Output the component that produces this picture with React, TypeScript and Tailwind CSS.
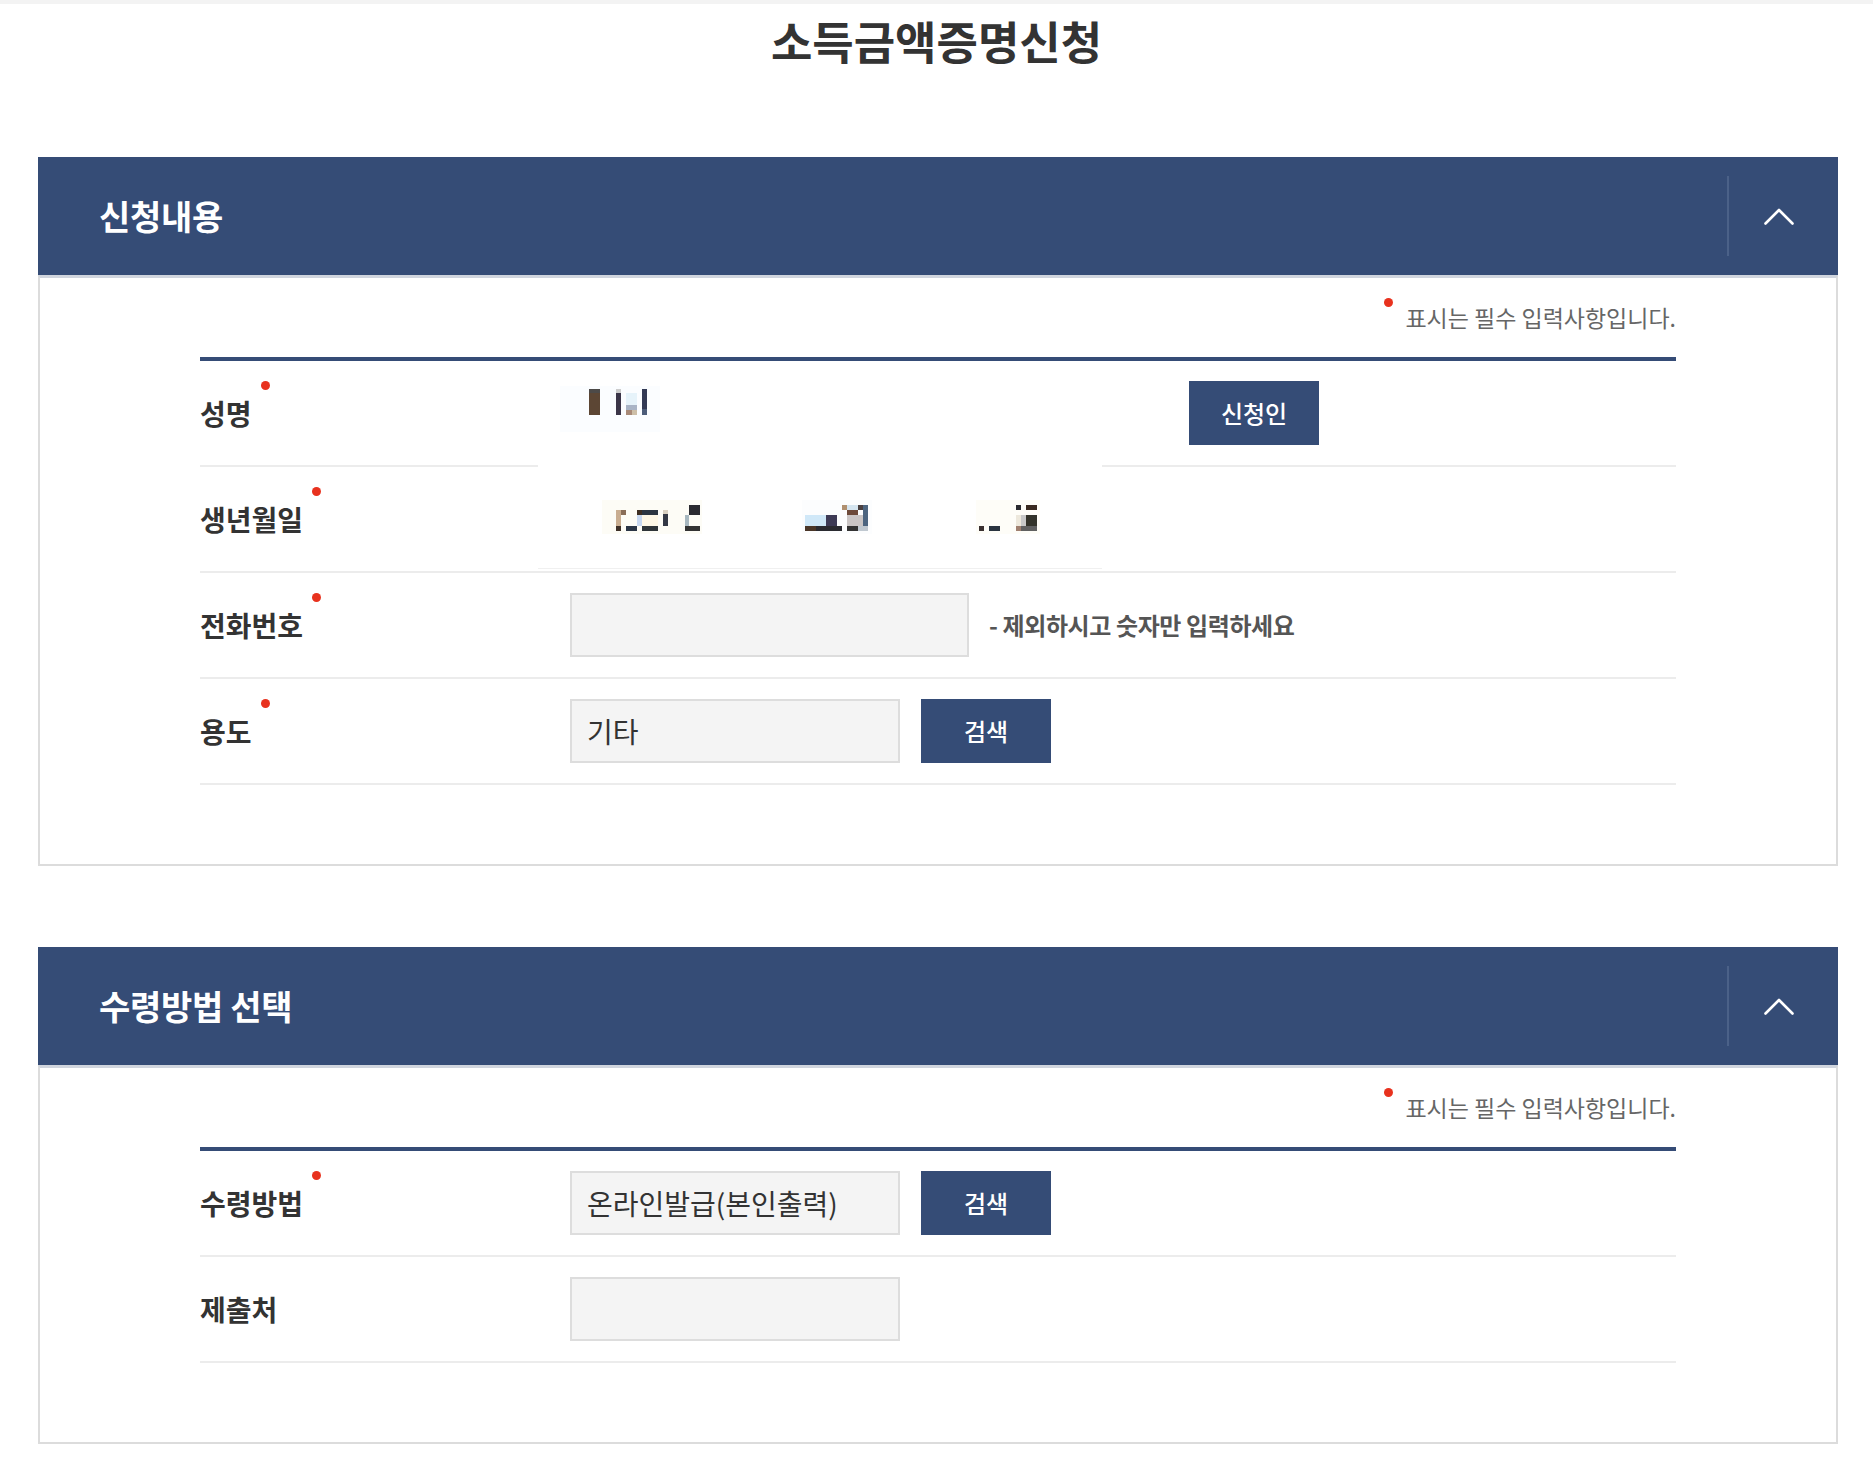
import type { ReactNode } from "react"

const FONT = { fontFamily: '"Noto Sans CJK KR", "Noto Sans", sans-serif' }

function Dot({ className = "" }: { className?: string }) {
  return <span className={`block w-[9px] h-[9px] rounded-full bg-[#e8321e] ${className}`} />
}

function ChevronUp() {
  return (
    <svg width="30" height="18" viewBox="0 0 30 18" fill="none">
      <polyline points="1.5,16.5 15,3 28.5,16.5" stroke="#fff" strokeWidth="2.6" strokeLinecap="round" strokeLinejoin="round" />
    </svg>
  )
}

function SectionHeader({ title }: { title: string }) {
  return (
    <div className="h-[118px] bg-[#354c76] flex items-center">
      <h2 className="flex-1 pl-[61px] text-[34px] leading-[40px] font-bold tracking-[-0.3px] text-white">{title}</h2>
      <div className="w-[2px] h-[80px] bg-[#4b6188]" />
      <button className="w-[100px] mr-[9px] h-full flex items-center justify-center">
        <ChevronUp />
      </button>
    </div>
  )
}

function RequiredNote() {
  return (
    <div className="flex justify-end items-start h-[30px]">
      <Dot className="mt-[-4px] mr-[12px]" />
      <span className="text-[23px] leading-[30px] text-[#666]">표시는 필수 입력사항입니다.</span>
    </div>
  )
}

function Row({ label, required, children }: { label: string; required?: boolean; children?: ReactNode }) {
  return (
    <div className="flex h-[106px] border-b-2 border-[#ececec]">
      <div className="w-[337px] flex items-center">
        <span className="relative inline-block text-[28px] leading-[36px] font-bold text-[#333]">
          {label}
          {required && <Dot className="absolute left-full ml-[9px] top-[-14px]" />}
        </span>
      </div>
      <div className="flex-1 flex items-center pl-[33px]">{children}</div>
    </div>
  )
}

function TextBox({ value, width }: { value?: string; width: string }) {
  return (
    <input
      type="text"
      defaultValue={value}
      style={FONT}
      className={`${width} h-[64px] border-2 border-[#dddddd] bg-[#f4f4f4] pl-[15px] text-[28px] text-[#333] outline-none`}
    />
  )
}

function NavyButton({ children, className = "" }: { children: ReactNode; className?: string }) {
  return (
    <button
      style={FONT}
      className={`w-[130px] h-[64px] bg-[#354c76] text-white text-[24px] font-medium ${className}`}
    >
      {children}
    </button>
  )
}

// pixelated redaction over the name / birth date values
const blobs: [number, number, number, number, string][] = [
  [560, 386, 100, 46, "#fbfdff"],
  [589, 389, 11, 4, "#4d4a48"],
  [589, 393, 11, 22, "#5c4634"],
  [616, 389, 5, 4, "#cccccc"],
  [616, 393, 5, 22, "#3b3548"],
  [626, 393, 11, 12, "#e6f3fa"],
  [626, 405, 11, 5, "#a9b4c6"],
  [626, 410, 6, 5, "#a88a78"],
  [632, 410, 5, 5, "#cdbfa8"],
  [642, 389, 5, 20, "#333a55"],
  [642, 409, 5, 6, "#4d5d7a"],
  // birth date group 1
  [602, 500, 100, 34, "#fdfcf6"],
  [616, 510, 5, 16, "#c9ad90"],
  [621, 510, 5, 5, "#8a6e58"],
  [637, 510, 5, 5, "#3d2e22"],
  [642, 510, 16, 5, "#2c3540"],
  [637, 515, 5, 11, "#c8d8f0"],
  [642, 515, 16, 11, "#fff8e6"],
  [663, 510, 5, 4, "#d8cfc0"],
  [663, 514, 5, 12, "#333845"],
  [685, 515, 4, 11, "#a8b8c0"],
  [689, 505, 11, 10, "#2a2a30"],
  [616, 526, 5, 5, "#3d3028"],
  [626, 526, 11, 5, "#2a3545"],
  [642, 526, 16, 5, "#2f3538"],
  [685, 526, 15, 5, "#333333"],
  // group 2
  [802, 500, 70, 34, "#fcfdfe"],
  [805, 515, 21, 11, "#d0e8f8"],
  [826, 515, 11, 11, "#3d3a55"],
  [842, 505, 5, 5, "#b09070"],
  [847, 505, 11, 5, "#d5e5f0"],
  [858, 505, 5, 5, "#4a4040"],
  [847, 510, 11, 5, "#6d4a3a"],
  [847, 515, 16, 11, "#cac5c5"],
  [863, 505, 5, 21, "#4d6580"],
  [805, 526, 11, 5, "#4a3628"],
  [816, 526, 26, 5, "#2a2a30"],
  [847, 526, 11, 5, "#333333"],
  [858, 526, 10, 5, "#c0c8d0"],
  // group 3
  [976, 500, 64, 34, "#fefdf8"],
  [1016, 505, 5, 5, "#2a2a30"],
  [1026, 505, 11, 5, "#3a2a20"],
  [1016, 515, 5, 11, "#ede8dc"],
  [1021, 515, 5, 11, "#c8c8c8"],
  [1026, 515, 11, 11, "#33332a"],
  [979, 526, 5, 5, "#3a3030"],
  [989, 526, 11, 5, "#2a3440"],
  [1016, 526, 5, 5, "#a08070"],
  [1021, 526, 16, 5, "#606060"],
]

function Redaction() {
  return (
    <div className="absolute left-[338px] top-0 w-[564px] h-[208px] bg-white border-b border-[#f0f0f0]">
      <svg width="564" height="207" viewBox="538 361 564 207">
        {blobs.map(([x, y, w, h, c], i) => (
          <rect key={i} x={x} y={y} width={w} height={h} fill={c} />
        ))}
      </svg>
    </div>
  )
}

function Section({ title, children, className = "" }: { title: string; children: ReactNode; className?: string }) {
  return (
    <section className={className}>
      <SectionHeader title={title} />
      <div className="border-x-2 border-b-2 border-[#dcdcdc] border-t-[3px] border-t-[#d0d5de] px-[160px] pt-[24px] pb-[79px]">
        <RequiredNote />
        <div className="mt-[25px] border-t-4 border-[#354c76]">{children}</div>
      </div>
    </section>
  )
}

export default function App() {
  return (
    <div style={FONT} className="min-h-[1473px] bg-white text-[#333]">
      <div className="h-[4px] bg-[#f3f3f3]" />
      <h1 className="h-[74px] flex items-center justify-center text-[45px] font-bold text-[#333]">
        소득금액증명신청
      </h1>

      <div className="ml-[38px] w-[1800px] mt-[79px]">
        <Section title="신청내용">
          <div className="relative">
            <Row label="성명" required>
              <span className="w-[619px]" />
              <NavyButton>신청인</NavyButton>
            </Row>
            <Row label="생년월일" required />
            <Row label="전화번호" required>
              <TextBox width="w-[399px]" />
              <span className="ml-[20px] text-[24px] font-bold tracking-[-0.4px] text-[#555]">- 제외하시고 숫자만 입력하세요</span>
            </Row>
            <Row label="용도" required>
              <TextBox width="w-[330px]" value="기타" />
              <NavyButton className="ml-[21px]">검색</NavyButton>
            </Row>
            <Redaction />
          </div>
        </Section>

        <Section title="수령방법 선택" className="mt-[81px]">
          <Row label="수령방법" required>
            <TextBox width="w-[330px]" value="온라인발급(본인출력)" />
            <NavyButton className="ml-[21px]">검색</NavyButton>
          </Row>
          <Row label="제출처">
            <TextBox width="w-[330px]" />
          </Row>
        </Section>
      </div>
    </div>
  )
}
